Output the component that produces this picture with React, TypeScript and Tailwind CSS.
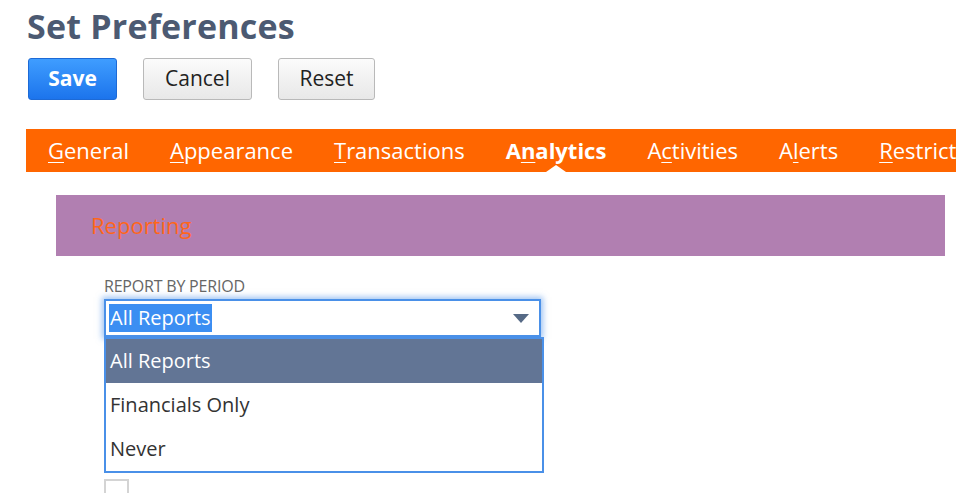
import { useState } from "react";

const tabs = [
  { pre: "", key: "G", post: "eneral" },
  { pre: "", key: "A", post: "ppearance" },
  { pre: "", key: "T", post: "ransactions" },
  { pre: "A", key: "n", post: "alytics", active: true },
  { pre: "A", key: "c", post: "tivities" },
  { pre: "A", key: "l", post: "erts" },
  { pre: "", key: "R", post: "estrictions" },
];

const options = ["All Reports", "Financials Only", "Never"];

export default function App() {
  const [selected] = useState(0);

  return (
    <div
      className="w-[956px] h-[493px] overflow-hidden bg-white"
      style={{ fontFamily: '"Open Sans", "Liberation Sans", sans-serif' }}
    >
      <div className="pl-[27px] pt-[6px]">
        <h1 className="text-[34px] leading-[40px] font-bold text-[#4c5a72] tracking-[0.2px]">
          Set Preferences
        </h1>
        <div className="flex gap-[26px] mt-[12px] ml-[1px]">
          <button className="w-[89px] h-[42px] rounded-[3px] border border-[#1d6ad6] bg-gradient-to-b from-[#3f9dff] to-[#1c74ec] text-white text-[21px] font-bold">
            Save
          </button>
          <button className="w-[109px] h-[42px] rounded-[3px] border border-[#b9b9b9] bg-gradient-to-b from-[#fbfbfb] to-[#e8e8e8] text-[#222] text-[21px]">
            Cancel
          </button>
          <button className="w-[97px] h-[42px] rounded-[3px] border border-[#b9b9b9] bg-gradient-to-b from-[#fbfbfb] to-[#e8e8e8] text-[#222] text-[21px]">
            Reset
          </button>
        </div>
      </div>

      <div className="ml-[26px] mt-[29px] h-[43px] bg-[#ff6600] flex items-center gap-[41px] pl-[22px] whitespace-nowrap">
        {tabs.map((t) => (
          <span
            key={t.post}
            className={`relative h-full flex items-center text-[22px] text-white ${
              t.active ? "font-bold" : ""
            }`}
          >
            <span>
              {t.pre}
              <span className="underline underline-offset-[3px] decoration-[1px]">{t.key}</span>
              {t.post}
            </span>
            {t.active && (
              <span className="absolute bottom-0 left-1/2 -translate-x-1/2 w-0 h-0 border-l-[10px] border-r-[10px] border-b-[7px] border-l-transparent border-r-transparent border-b-white" />
            )}
          </span>
        ))}
      </div>

      <div className="ml-[56px] w-[889px] mt-[23px] h-[61px] bg-[#b17fb1] flex items-center pl-[35px]">
        <span className="text-[22px] text-[#ff661a]">Reporting</span>
      </div>

      <div className="ml-[104px] mt-[19px]">
        <div className="text-[16px] leading-[22px] text-[#666] tracking-[-0.2px]">REPORT BY PERIOD</div>
        <div className="mt-[2px] w-[437px] h-[38px] border-2 border-[#4a90e8] shadow-[0_0_6px_2px_rgba(74,144,232,0.55)] bg-white flex items-center justify-between pl-[3px] pr-[10px]">
          <span className="bg-[#3b8ef2] text-white text-[20px] leading-[28px] px-[1px]">
            {options[selected]}
          </span>
          <span className="w-0 h-0 border-l-[8px] border-r-[8px] border-t-[9px] border-l-transparent border-r-transparent border-t-[#566a86]" />
        </div>
        <div className="w-[440px] border-2 border-[#4a90e8] bg-white">
          {options.map((o, i) => (
            <div
              key={o}
              className={`h-[44px] flex items-center pl-[4px] text-[20px] ${
                i === selected ? "bg-[#627595] text-white" : "text-[#333]"
              }`}
            >
              {o}
            </div>
          ))}
        </div>
        <div className="mt-[6px] w-[25px] h-[25px] border-2 border-[#d4d4d4] bg-white" />
      </div>
    </div>
  );
}
